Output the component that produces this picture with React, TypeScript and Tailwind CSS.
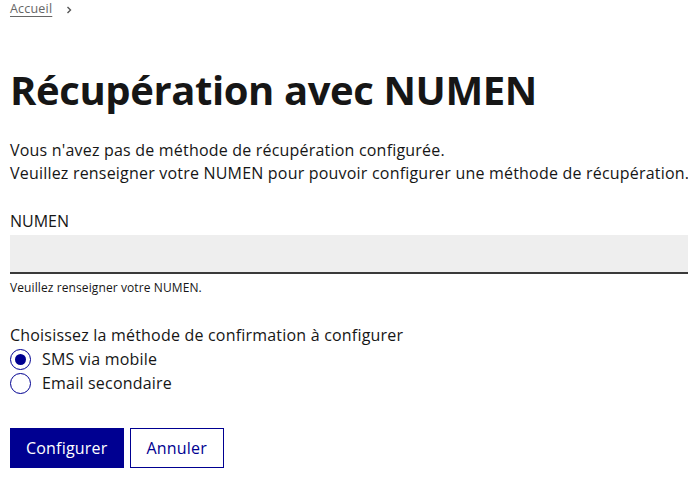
import { useState } from "react";

export default function App() {
  const [method, setMethod] = useState<"sms" | "email">("sms");

  const options = [
    { id: "sms" as const, label: "SMS via mobile" },
    { id: "email" as const, label: "Email secondaire" },
  ];

  return (
    <div
      className="w-[688px] h-[477px] overflow-hidden bg-white text-[#161616] pl-[10px]"
      style={{ fontFamily: '"Open Sans", "Noto Sans", sans-serif' }}
    >
      {/* Breadcrumb */}
      <nav className="flex items-center gap-[12px] pt-[1px] h-[18px] text-[12.5px] text-[#666666]">
        <a href="#" className="underline underline-offset-[3px] decoration-[#666666] tracking-[0.2px]">
          Accueil
        </a>
        <svg width="10" height="10" viewBox="0 0 10 10" fill="none" stroke="#555" strokeWidth="1.4">
          <path d="M3.5 2l3 3-3 3" />
        </svg>
      </nav>

      {/* Title */}
      <h1 className="mt-[48px] text-[40px] leading-[48px] font-bold tracking-[-0.4px]">
        Récupération avec NUMEN
      </h1>

      {/* Intro */}
      <div className="mt-[25px] text-[16px] leading-[23px] tracking-[0.2px] whitespace-nowrap">
        <p>Vous n'avez pas de méthode de récupération configurée.</p>
        <p>Veuillez renseigner votre NUMEN pour pouvoir configurer une méthode de récupération.</p>
      </div>

      {/* NUMEN field */}
      <div className="mt-[24px]">
        <label className="block text-[16px] leading-[24px]">NUMEN</label>
        <input
          type="text"
          className="mt-[2px] block w-[700px] h-[39px] bg-[#eeeeee] border-b-2 border-[#3a3a3a] outline-none px-4"
        />
        <p className="mt-[6px] text-[12px] leading-[16px] tracking-[0.1px]">Veuillez renseigner votre NUMEN.</p>
      </div>

      {/* Method */}
      <fieldset className="mt-[27px]">
        <legend className="text-[16px] leading-[24px] tracking-[0.2px]">
          Choisissez la méthode de confirmation à configurer
        </legend>
        <div className="flex flex-col">
          {options.map((opt) => (
            <label
              key={opt.id}
              className="flex items-center gap-[11px] h-[24px] text-[16px] tracking-[0.2px] cursor-pointer"
              onClick={() => setMethod(opt.id)}
            >
              <span className="w-[21px] h-[21px] rounded-full border border-[#000091] flex items-center justify-center">
                {method === opt.id && <span className="w-[11px] h-[11px] rounded-full bg-[#000091]" />}
              </span>
              {opt.label}
            </label>
          ))}
        </div>
      </fieldset>

      {/* Actions */}
      <div className="mt-[33px] flex gap-[6px]">
        <button className="h-[40px] px-[16px] bg-[#000091] text-white text-[16px] font-medium tracking-[0.2px]">
          Configurer
        </button>
        <button className="h-[40px] px-[16px] border border-[#000091] text-[#000091] text-[16px] font-medium tracking-[0.2px]">
          Annuler
        </button>
      </div>
    </div>
  );
}
